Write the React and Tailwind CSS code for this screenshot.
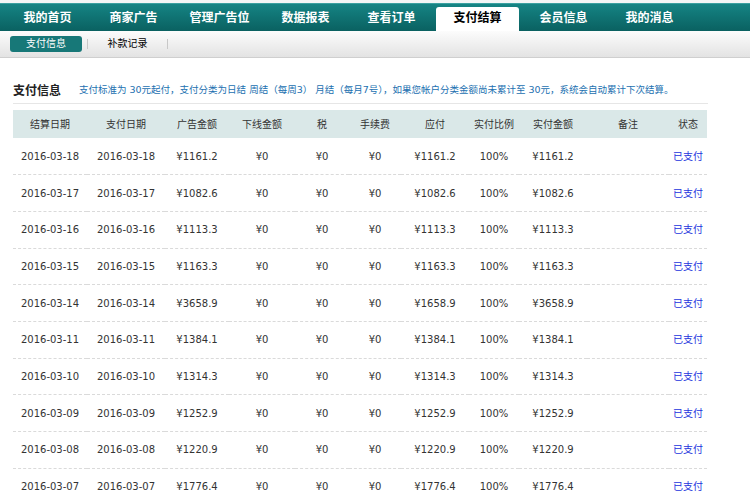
import React from "react";

const navs = ["我的首页", "商家广告", "管理广告位", "数据报表", "查看订单", "支付结算", "会员信息", "我的消息"];
const heads = ["结算日期", "支付日期", "广告金额", "下线金额", "税", "手续费", "应付", "实付比例", "实付金额", "备注", "状态"];
const widths = [74, 78, 64, 66, 54, 52, 68, 50, 68, 82, 38];
const rows = [
  ["2016-03-18", "1161.2", "1161.2", "1161.2"],
  ["2016-03-17", "1082.6", "1082.6", "1082.6"],
  ["2016-03-16", "1113.3", "1113.3", "1113.3"],
  ["2016-03-15", "1163.3", "1163.3", "1163.3"],
  ["2016-03-14", "3658.9", "1658.9", "3658.9"],
  ["2016-03-11", "1384.1", "1384.1", "1384.1"],
  ["2016-03-10", "1314.3", "1314.3", "1314.3"],
  ["2016-03-09", "1252.9", "1252.9", "1252.9"],
  ["2016-03-08", "1220.9", "1220.9", "1220.9"],
  ["2016-03-07", "1776.4", "1776.4", "1776.4"],
];

const font = { fontFamily: '"DejaVu Sans", "Noto Sans CJK SC", sans-serif' };

export default function App() {
  return (
    <div className="w-[750px] h-[502px] overflow-hidden bg-white text-[#333]" style={font}>
      {/* top nav */}
      <div className="pt-[3px] bg-[#f2f5f5]">
        <div className="h-[28px] border-t border-[#3aa0a0] bg-gradient-to-b from-[#158484] to-[#0a6161] flex pl-[6px] gap-[3px]">
          {navs.map((n, i) => (
            <div
              key={n}
              className={
                i === 5
                  ? "w-[83px] mt-[3px] h-[24px] rounded-t-[3px] bg-white text-black text-[12px] font-bold leading-[14px] pt-[3px] text-center"
                  : "w-[83px] mt-[3px] h-[24px] text-white text-[12px] font-bold leading-[14px] pt-[3px] text-center"
              }
              style={{ fontFamily: '"Noto Sans CJK SC", sans-serif' }}
            >
              {n}
            </div>
          ))}
        </div>
      </div>
      {/* sub nav */}
      <div className="h-[27px] bg-gradient-to-b from-[#fcfcfc] to-[#e3e3e3] border-b border-[#cfcfcf] flex items-center">
        <div className="ml-[10px] w-[72px] h-[16px] rounded-[3px] bg-[#177878] text-white text-[10px] leading-[16px] text-center">
          支付信息
        </div>
        <div className="ml-[5px] w-px h-[10px] bg-[#c8c8c8]" />
        <div className="w-[79px] text-[10px] text-black text-center leading-[16px]">补款记录</div>
        <div className="w-px h-[10px] bg-[#c8c8c8]" />
      </div>
      {/* content */}
      <div className="ml-[13px] w-[695px]">
        <div className="pt-[25px] pb-[6px] border-b border-[#e6e6e6] flex items-center leading-[14px]">
          <span className="text-[12px] font-bold text-[#222] w-[66px]" style={{ fontFamily: '"Noto Sans CJK SC", sans-serif' }}>
            支付信息
          </span>
          <span className="text-[9.5px] text-[#2270b0] whitespace-nowrap">
            支付标准为 30元起付，支付分类为日结 周结（每周3） 月结（每月7号），如果您帐户分类金额尚未累计至 30元，系统会自动累计下次结算。
          </span>
        </div>
        <table className="mt-[6px] table-fixed border-collapse w-[694px] text-[10px]">
          <colgroup>
            {widths.map((w, i) => (
              <col key={i} style={{ width: w }} />
            ))}
          </colgroup>
          <thead>
            <tr className="h-[28px] bg-[#dae8e8]">
              {heads.map((h) => (
                <th key={h} className="font-normal text-center text-[#333]">
                  {h}
                </th>
              ))}
            </tr>
          </thead>
          <tbody>
            {rows.map((r) => (
              <tr key={r[0]} className="h-[36.7px] border-b border-dashed border-[#dadada]">
                <td className="text-center">{r[0]}</td>
                <td className="text-center">{r[0]}</td>
                <td className="text-center">¥{r[1]}</td>
                <td className="text-center">¥0</td>
                <td className="text-center">¥0</td>
                <td className="text-center">¥0</td>
                <td className="text-center">¥{r[2]}</td>
                <td className="text-center">100%</td>
                <td className="text-center">¥{r[3]}</td>
                <td className="text-center"></td>
                <td className="text-center text-[#2233dd]">已支付</td>
              </tr>
            ))}
          </tbody>
        </table>
      </div>
    </div>
  );
}
